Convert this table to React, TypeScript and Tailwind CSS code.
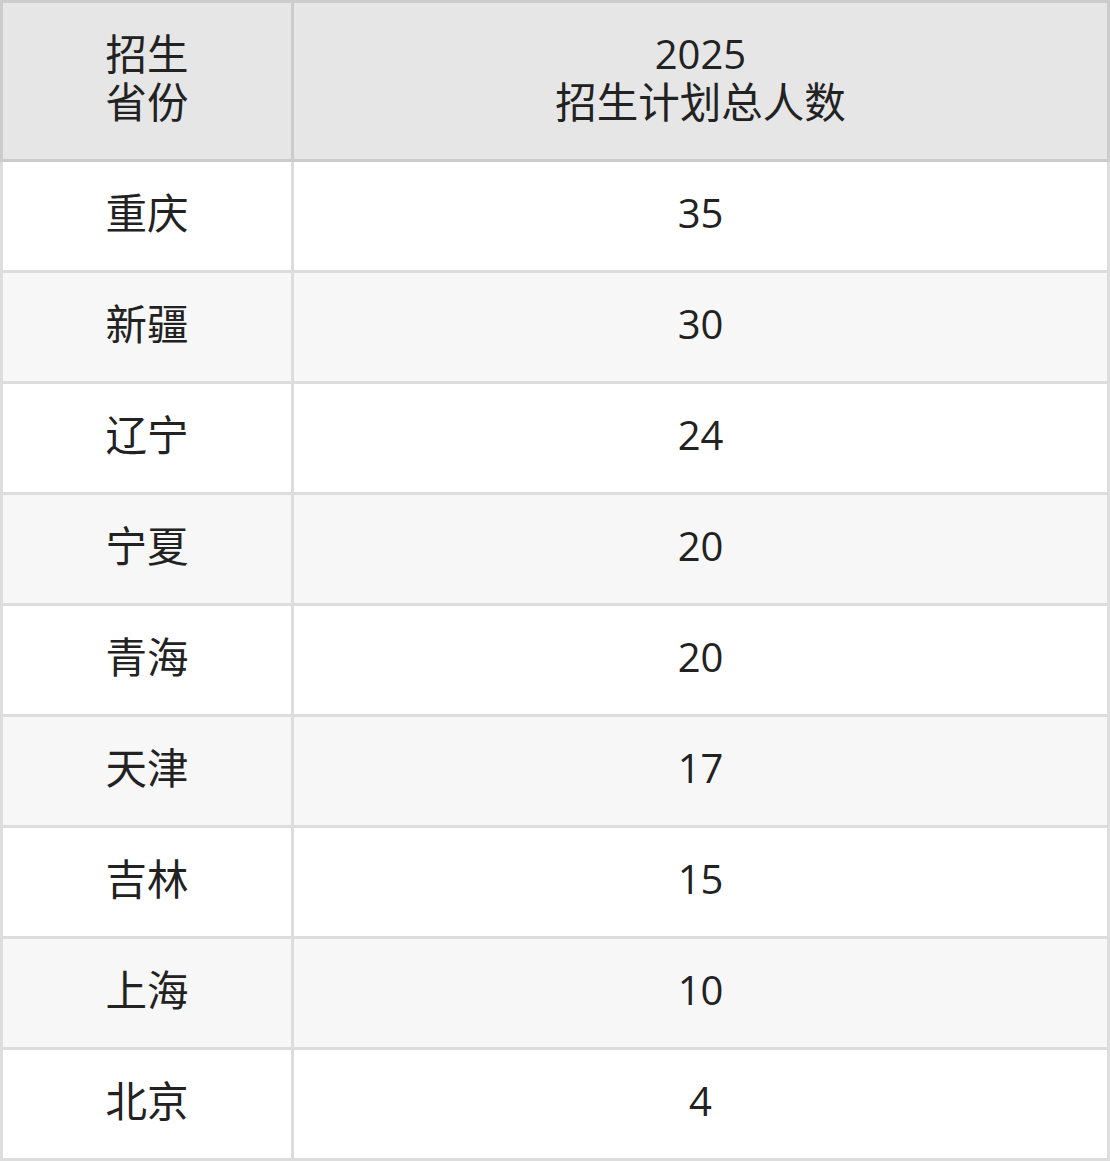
const rows: [string, string][] = [
  ['重庆', '35'],
  ['新疆', '30'],
  ['辽宁', '24'],
  ['宁夏', '20'],
  ['青海', '20'],
  ['天津', '17'],
  ['吉林', '15'],
  ['上海', '10'],
  ['北京', '4'],
];

export default function App() {
  return (
    <div
      className="w-[1110px] text-[40px] text-[#222222]"
      style={{ fontFamily: '"Open Sans", "Noto Sans CJK SC", sans-serif' }}
    >
      <div className="flex h-[162px] border-[3px] border-[#cccccc] bg-[#e6e6e6] leading-[48px]">
        <div className="flex w-[291px] shrink-0 items-center justify-center border-r-[3px] border-[#cccccc] pb-[6px] text-center text-[41.5px]">
          招生
          <br />
          省份
        </div>
        <div className="flex flex-1 items-center justify-center pb-[6px] text-center">
          <div>
            2025
            <br />
            <span className="text-[41.5px]">招生计划总人数</span>
          </div>
        </div>
      </div>
      {rows.map(([name, count], i) => (
        <div
          key={name + i}
          className={
            'flex h-[111px] border-x-[3px] border-b-[3px] border-[#dddddd] ' +
            (i % 2 === 1 ? 'bg-[#f7f7f7]' : 'bg-white')
          }
        >
          <div className="flex w-[291px] shrink-0 items-center justify-center border-r-[3px] border-[#dddddd] pb-[6px] text-[41.5px]">
            {name}
          </div>
          <div className="flex flex-1 items-center justify-center pb-[6px]">{count}</div>
        </div>
      ))}
    </div>
  );
}
